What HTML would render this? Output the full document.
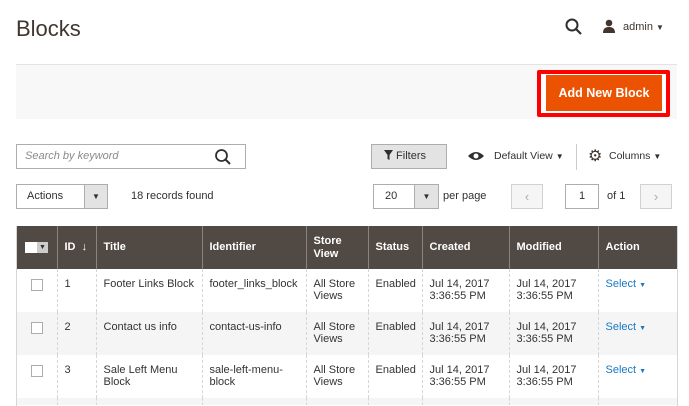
<!DOCTYPE html>
<html><head><meta charset="utf-8"><style>
*{box-sizing:border-box;margin:0;padding:0}
html,body{width:689px;height:406px;overflow:hidden}
body{background:#fff;font-family:"Liberation Sans",sans-serif;color:#303030;position:relative;font-size:11px}
.a{position:absolute}
.hdr{left:16px;top:64px;width:661px;height:55px;background:#f8f8f8;border-top:1px solid #e3e3e3}
.red{left:537px;top:70px;width:133px;height:47px;border:4px solid #f00;border-radius:2px;background:#fff}
.btn{left:546px;top:75px;width:116px;height:36px;background:#eb5202;color:#fff;font-weight:bold;font-size:12.5px;text-align:center;line-height:36px}
.box{border:1px solid #adadad;background:#fff}
table{position:absolute;left:16px;top:226px;width:662px;border-collapse:collapse;table-layout:fixed}
th{background:#514943;color:#fff;font-weight:bold;text-align:left;height:43px;padding:0 7px;border-left:1px solid #8a837f;font-size:11px;line-height:13px;vertical-align:middle}
td{vertical-align:top;padding:9px 7px 0;height:43px;border-left:1px dashed #d6d6d6;line-height:12px;color:#333}
tr.g td{background:#f5f5f5}
tr.last td{height:7px;padding:0}
.cb{display:inline-block;width:12px;height:12px;border:1px solid #adadad;background:#fff;margin-left:8px;margin-top:1px}
.sel{color:#1979c3}
</style></head><body>
<div class="a" style="left:16px;top:16px;font-size:22px;color:#41362f">Blocks</div>
<svg class="a" style="left:565px;top:18px" width="18" height="18" viewBox="0 0 18 18"><circle cx="7" cy="7" r="5.5" fill="none" stroke="#303030" stroke-width="2"/><path d="M11 11l5 5" stroke="#303030" stroke-width="2.2"/></svg>
<svg class="a" style="left:602px;top:19px" width="14" height="14" viewBox="0 0 14 14"><circle cx="7" cy="4" r="3.3" fill="#41362f"/><path d="M1 14c0-5 3-6 6-6s6 1 6 6z" fill="#41362f"/></svg>
<div class="a" style="left:623px;top:21px;font-size:11px;color:#41362f">admin <span style="font-size:8px">▼</span></div>
<div class="a hdr"></div>
<div class="a red"></div>
<div class="a btn">Add New Block</div>

<div class="a box" style="left:16px;top:144px;width:230px;height:25px;color:#8a8a8a;font-style:italic;padding:5px 8px">Search by keyword</div>
<svg class="a" style="left:214px;top:148px" width="18" height="18" viewBox="0 0 18 18"><circle cx="7.5" cy="7.5" r="5.5" fill="none" stroke="#303030" stroke-width="1.8"/><path d="M11.5 11.5l4.5 4.5" stroke="#303030" stroke-width="2"/></svg>
<div class="a" style="left:371px;top:144px;width:76px;height:25px;background:#e3e3e3;border:1px solid #adadad;padding:5px 0 0 12px;color:#303030">
<svg width="9" height="10" viewBox="0 0 9 10" style="vertical-align:-1px"><path d="M0 0h9L5.5 5v5L3.5 9V5z" fill="#303030"/></svg> Filters</div>
<svg class="a" style="left:467px;top:150px" width="18" height="12" viewBox="0 0 18 12"><path d="M1 6Q9-2 17 6Q9 14 1 6z" fill="#303030"/><circle cx="9" cy="6" r="2.5" fill="#fff"/></svg>
<div class="a" style="left:494px;top:150px;color:#303030;font-size:10.5px">Default View <span style="font-size:8px">▼</span></div>
<div class="a" style="left:576px;top:144px;width:1px;height:26px;background:#ccc"></div>
<div class="a" style="left:588px;top:146px;font-size:16px;color:#41362f">⚙</div>
<div class="a" style="left:609px;top:150px;font-size:10.5px">Columns <span style="font-size:8px">▼</span></div>

<div class="a box" style="left:16px;top:184px;width:92px;height:25px;padding:5px 10px">Actions</div>
<div class="a" style="left:84px;top:185px;width:23px;height:23px;background:#e3e3e3;border-left:1px solid #adadad;font-size:8px;text-align:center;line-height:23px">▼</div>
<div class="a" style="left:131px;top:190px">18 records found</div>
<div class="a box" style="left:373px;top:184px;width:66px;height:25px;padding:5px 11px">20</div>
<div class="a" style="left:414px;top:185px;width:24px;height:23px;background:#e3e3e3;border-left:1px solid #adadad;font-size:8px;text-align:center;line-height:23px">▼</div>
<div class="a" style="left:443px;top:190px">per page</div>
<div class="a" style="left:511px;top:184px;width:32px;height:25px;border:1px solid #d1d1d1;background:#f5f5f5;color:#aaa;text-align:center;line-height:23px;font-size:13px">‹</div>
<div class="a box" style="left:565px;top:184px;width:34px;height:25px;text-align:center;line-height:23px">1</div>
<div class="a" style="left:607px;top:190px">of 1</div>
<div class="a" style="left:640px;top:184px;width:32px;height:25px;border:1px solid #d1d1d1;background:#f5f5f5;color:#aaa;text-align:center;line-height:23px;font-size:13px">›</div>

<table>
<colgroup><col style="width:41px"><col style="width:39px"><col style="width:106px"><col style="width:104px"><col style="width:62px"><col style="width:54px"><col style="width:87px"><col style="width:89px"><col style="width:80px"></colgroup>
<tr><th style="border-left:none;padding-left:9px"><span style="display:inline-block;width:23px;height:11px;background:#fff;vertical-align:middle;position:relative"><span style="position:absolute;right:0;top:0;width:11px;height:11px;background:#ccc;color:#303030;font-size:7px;text-align:center;line-height:11px">▼</span></span></th><th>ID &nbsp;↓</th><th>Title</th><th>Identifier</th><th>Store<br>View</th><th>Status</th><th>Created</th><th>Modified</th><th>Action</th></tr>
<tr><td style="border-left:none"><span class="cb"></span></td><td>1</td><td>Footer Links Block</td><td>footer_links_block</td><td>All Store<br>Views</td><td>Enabled</td><td>Jul 14, 2017<br>3:36:55 PM</td><td>Jul 14, 2017<br>3:36:55 PM</td><td class="sel">Select <span style="font-size:7px">▼</span></td></tr>
<tr class="g"><td style="border-left:none"><span class="cb"></span></td><td>2</td><td>Contact us info</td><td>contact-us-info</td><td>All Store<br>Views</td><td>Enabled</td><td>Jul 14, 2017<br>3:36:55 PM</td><td>Jul 14, 2017<br>3:36:55 PM</td><td class="sel">Select <span style="font-size:7px">▼</span></td></tr>
<tr><td style="border-left:none"><span class="cb"></span></td><td>3</td><td>Sale Left Menu Block</td><td>sale-left-menu-block</td><td>All Store<br>Views</td><td>Enabled</td><td>Jul 14, 2017<br>3:36:55 PM</td><td>Jul 14, 2017<br>3:36:55 PM</td><td class="sel">Select <span style="font-size:7px">▼</span></td></tr>
<tr class="g last"><td style="border-left:none"></td><td></td><td></td><td></td><td></td><td></td><td></td><td></td><td></td></tr>
</table>
<div class="a" style="left:16px;top:226px;width:1px;height:180px;background:#d6d6d6"></div>
<div class="a" style="left:677px;top:226px;width:1px;height:180px;background:#d6d6d6"></div>
</body></html>
